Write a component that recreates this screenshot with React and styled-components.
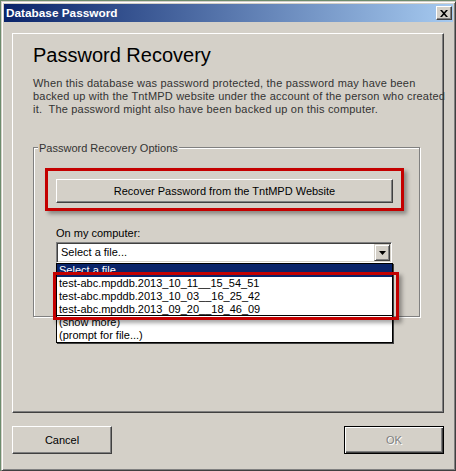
import React from "react";
import styled, { createGlobalStyle } from "styled-components";

const GlobalStyle = createGlobalStyle`
  html, body { margin: 0; padding: 0; }
  body {
    background: #6d8c6d;
    font-family: "Liberation Sans", Arial, sans-serif;
    font-size: 11px;
  }
`;

const Win = styled.div`
  box-sizing: border-box;
  width: 455px;
  height: 470px;
  margin: 1px 0 0 1px;
  background: #d4d0c8;
  border: 1px solid;
  border-color: #d4d0c8 #404040 #404040 #d4d0c8;
  box-shadow: inset 1px 1px #ffffff, inset -1px -1px #808080;
  padding: 2px;
  display: flex;
  flex-direction: column;
`;

const TitleBar = styled.div`
  height: 18px;
  flex: none;
  display: flex;
  align-items: center;
  justify-content: space-between;
  padding: 0 1px 0 2px;
  background: linear-gradient(to right, #0a246a, #a6caf0);
`;

const TitleText = styled.span`
  color: #fff;
  font-weight: bold;
  font-size: 11.8px;
  line-height: 18px;
`;

const CloseBtn = styled.div`
  box-sizing: border-box;
  width: 16px;
  height: 14px;
  background: #d4d0c8;
  border: 1px solid;
  border-color: #fff #404040 #404040 #fff;
  box-shadow: inset -1px -1px #808080;
  display: flex;
  align-items: center;
  justify-content: center;
`;

const Client = styled.div`
  flex: 1;
  display: flex;
  flex-direction: column;
  gap: 13px;
  padding: 11px 9px 14px 8px;
`;

const Panel = styled.div`
  box-sizing: border-box;
  height: 380px;
  flex: none;
  border: 1px solid;
  border-color: #fff #404040 #404040 #fff;
  box-shadow: inset -1px -1px #808080;
  padding: 8px 0 0 20px;
`;

const Heading = styled.h1`
  margin: 0;
  font-weight: normal;
  font-size: 20px;
  line-height: 26px;
  color: #000;
`;

const Intro = styled.p`
  margin: 9px 0 0;
  line-height: 13px;
  letter-spacing: 0.2px;
  color: #333;
  white-space: nowrap;
`;

const Group = styled.div`
  position: relative;
  box-sizing: border-box;
  margin-top: 31px;
  width: 387px;
  height: 170px;
  border: 1px solid #808080;
  box-shadow: inset 1px 1px #fff, 1px 1px #fff;
  padding: 31px 0 0 22px;
`;

const GroupLabel = styled.span`
  position: absolute;
  left: 4px;
  top: -6px;
  padding: 0 1px;
  line-height: 13px;
  background: #d4d0c8;
  color: #333;
`;

const Button = styled.div`
  box-sizing: border-box;
  width: ${(p) => p.$w}px;
  height: ${(p) => p.$h}px;
  background: #d4d0c8;
  border: 1px solid;
  border-color: ${(p) => (p.$default ? "#000" : "#fff #404040 #404040 #fff")};
  box-shadow: ${(p) =>
    p.$default
      ? "inset 1px 1px #fff, inset -1px -1px #404040, inset -2px -2px #808080"
      : "inset -1px -1px #808080"};
  display: flex;
  align-items: center;
  justify-content: center;
  line-height: 13px;
  color: ${(p) => (p.$disabled ? "#808080" : "#000")};
  text-shadow: ${(p) => (p.$disabled ? "1px 1px #fff" : "none")};
`;

const FieldLabel = styled.div`
  margin-top: 24px;
  line-height: 13px;
  color: #000;
`;

const Combo = styled.div`
  position: relative;
  margin-top: 2px;
  width: 336px;
`;

const ComboField = styled.div`
  box-sizing: border-box;
  height: 21px;
  background: #fff;
  border: 1px solid;
  border-color: #808080 #fff #fff #808080;
  box-shadow: inset 1px 1px #404040, inset -1px -1px #d4d0c8;
  padding: 1px;
  display: flex;
  align-items: center;
  justify-content: space-between;
`;

const ComboText = styled.span`
  padding-left: 3px;
  line-height: 17px;
  color: #000;
`;

const ArrowBtn = styled.div`
  box-sizing: border-box;
  width: 16px;
  height: 17px;
  background: #d4d0c8;
  border: 1px solid;
  border-color: #d4d0c8 #404040 #404040 #d4d0c8;
  box-shadow: inset 1px 1px #fff, inset -1px -1px #808080;
  display: flex;
  align-items: center;
  justify-content: center;
`;

const DropList = styled.div`
  position: absolute;
  left: 0;
  top: 21px;
  box-sizing: border-box;
  width: 337px;
  background: #fff;
  border: 1px solid #000;
  box-shadow: 1px 1px 0 #404040;
  z-index: 2;
`;

const Option = styled.div`
  box-sizing: border-box;
  height: 13px;
  line-height: 13px;
  padding-left: 2px;
  white-space: nowrap;
  color: ${(p) => (p.$active ? "#fff" : "#000")};
  background: ${(p) => (p.$active ? "#0a246a" : "transparent")};
  border-bottom: ${(p) => (p.$focus ? "1px solid #000" : "none")};
`;

const Highlight = styled.div`
  position: absolute;
  box-sizing: border-box;
  border: 3px solid #c40000;
  box-shadow: 3px 3px 4px rgba(0, 0, 0, 0.35);
  pointer-events: none;
  z-index: 3;
`;

const ButtonRow = styled.div`
  display: flex;
  justify-content: space-between;
  align-items: center;
`;

const files = [
  "test-abc.mpddb.2013_10_11__15_54_51",
  "test-abc.mpddb.2013_10_03__16_25_42",
  "test-abc.mpddb.2013_09_20__18_46_09",
];

export default function App() {
  return (
    <>
      <GlobalStyle />
      <Win>
        <TitleBar>
          <TitleText>Database Password</TitleText>
          <CloseBtn>
            <svg width="8" height="7" viewBox="0 0 8 7">
              <path
                d="M0 0h2l2 2.2L6 0h2L5 3.5 8 7H6L4 4.8 2 7H0l3-3.5z"
                fill="#000"
              />
            </svg>
          </CloseBtn>
        </TitleBar>
        <Client>
          <Panel>
            <Heading>Password Recovery</Heading>
            <Intro>
              When this database was password protected, the password may have been
              <br />
              backed up with the TntMPD website under the account of the person who created
              <br />
              it.&nbsp; The password might also have been backed up on this computer.
            </Intro>
            <Group>
              <GroupLabel>Password Recovery Options</GroupLabel>
              <Button $w={337} $h={24}>
                Recover Password from the TntMPD Website
              </Button>
              <FieldLabel>On my computer:</FieldLabel>
              <Combo>
                <ComboField>
                  <ComboText>Select a file...</ComboText>
                  <ArrowBtn>
                    <svg width="7" height="4" viewBox="0 0 7 4">
                      <path d="M0 0h7L3.5 4z" fill="#000" />
                    </svg>
                  </ArrowBtn>
                </ComboField>
                <DropList>
                  <Option $active>Select a file...</Option>
                  {files.map((f, i) => (
                    <Option key={f} $focus={i === files.length - 1}>
                      {f}
                    </Option>
                  ))}
                  <Option>(show more)</Option>
                  <Option>(prompt for file...)</Option>
                </DropList>
              </Combo>
              <Highlight style={{ left: 11, top: 20, width: 359, height: 43 }} />
              <Highlight style={{ left: 19, top: 124, width: 346, height: 48 }} />
            </Group>
          </Panel>
          <ButtonRow>
            <Button $w={100} $h={28}>Cancel</Button>
            <Button $w={100} $h={28} $default $disabled>OK</Button>
          </ButtonRow>
        </Client>
      </Win>
    </>
  );
}
